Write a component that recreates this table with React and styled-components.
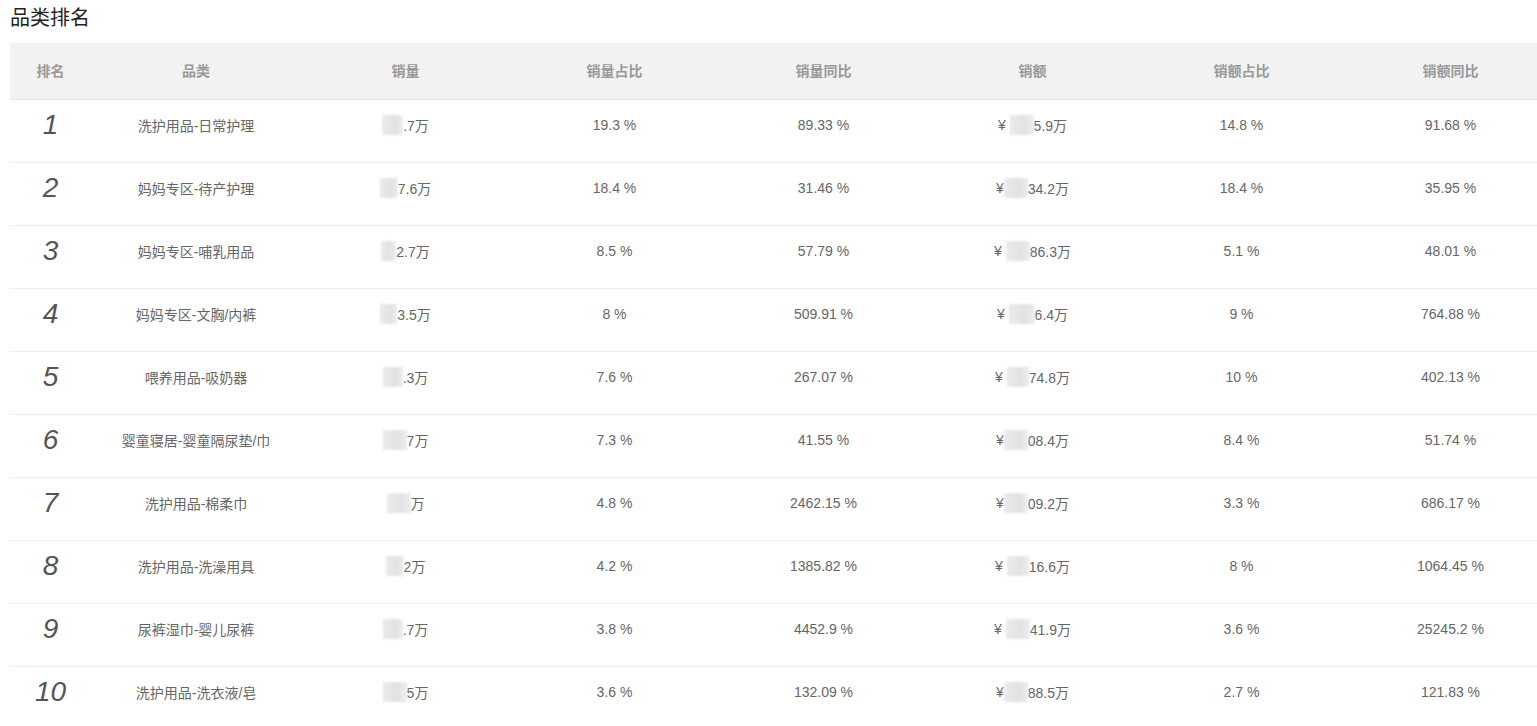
import React from "react";
import styled, { createGlobalStyle } from "styled-components";

const GlobalStyle = createGlobalStyle`
  html, body {
    margin: 0;
    padding: 0;
    overflow: hidden;
    background: #fff;
  }
  body {
    font-family: "Liberation Sans", "Noto Sans CJK SC", Arial, sans-serif;
  }
`;

const rows = [
  { name: "洗护用品-日常护理", qty: ".7万", qb: 21, qs: "19.3 %", qy: "89.33 %", yen: "¥ ", amt: "5.9万", ab: 24, as: "14.8 %", ay: "91.68 %" },
  { name: "妈妈专区-待产护理", qty: "7.6万", qb: 18, qs: "18.4 %", qy: "31.46 %", yen: "¥", amt: "34.2万", ab: 24, as: "18.4 %", ay: "35.95 %" },
  { name: "妈妈专区-哺乳用品", qty: "2.7万", qb: 15, qs: "8.5 %", qy: "57.79 %", yen: "¥ ", amt: "86.3万", ab: 24, as: "5.1 %", ay: "48.01 %" },
  { name: "妈妈专区-文胸/内裤", qty: "3.5万", qb: 17, qs: "8 %", qy: "509.91 %", yen: "¥ ", amt: "6.4万", ab: 26, as: "9 %", ay: "764.88 %" },
  { name: "喂养用品-吸奶器", qty: ".3万", qb: 20, qs: "7.6 %", qy: "267.07 %", yen: "¥ ", amt: "74.8万", ab: 22, as: "10 %", ay: "402.13 %" },
  { name: "婴童寝居-婴童隔尿垫/巾", qty: "7万", qb: 24, qs: "7.3 %", qy: "41.55 %", yen: "¥", amt: "08.4万", ab: 24, as: "8.4 %", ay: "51.74 %" },
  { name: "洗护用品-棉柔巾", qty: "万", qb: 24, qs: "4.8 %", qy: "2462.15 %", yen: "¥", amt: "09.2万", ab: 24, as: "3.3 %", ay: "686.17 %" },
  { name: "洗护用品-洗澡用具", qty: "2万", qb: 18, qs: "4.2 %", qy: "1385.82 %", yen: "¥ ", amt: "16.6万", ab: 22, as: "8 %", ay: "1064.45 %" },
  { name: "尿裤湿巾-婴儿尿裤", qty: ".7万", qb: 20, qs: "3.8 %", qy: "4452.9 %", yen: "¥ ", amt: "41.9万", ab: 24, as: "3.6 %", ay: "25245.2 %" },
  { name: "洗护用品-洗衣液/皂", qty: "5万", qb: 24, qs: "3.6 %", qy: "132.09 %", yen: "¥", amt: "88.5万", ab: 24, as: "2.7 %", ay: "121.83 %" },
];

const headers = ["排名", "品类", "销量", "销量占比", "销量同比", "销额", "销额占比", "销额同比"];

function App() {
  return (
    <>
      <GlobalStyle />
      <Page>
        <Title>品类排名</Title>
        <Table>
          <HeadRow>
            {headers.map((h) => (
              <HeadCell key={h}>{h}</HeadCell>
            ))}
          </HeadRow>
          {rows.map((r, i) => (
            <Row key={r.name}>
              <Rank>{i + 1}</Rank>
              <Cell>{r.name}</Cell>
              <Cell>
                <Masked $w={r.qb} />
                {r.qty}
              </Cell>
              <Cell>{r.qs}</Cell>
              <Cell>{r.qy}</Cell>
              <Cell>
                {r.yen}
                <Masked $w={r.ab} />
                {r.amt}
              </Cell>
              <Cell>{r.as}</Cell>
              <Cell>{r.ay}</Cell>
            </Row>
          ))}
        </Table>
      </Page>
    </>
  );
}

export default App;

const Page = styled.div`
  padding: 0 10px;
  width: 1560px;
`;

const Title = styled.div`
  font-size: 20px;
  line-height: 26px;
  color: #222;
  padding: 5px 0 12px;
`;

const Table = styled.div`
  width: 1545px;
`;

const HeadRow = styled.div`
  display: grid;
  grid-template-columns: 81px 210px repeat(6, 209px);
  height: 57px;
  background: #f2f2f2;
  border-bottom: 1px solid #e6e6ee;
  box-sizing: border-box;
`;

const HeadCell = styled.div`
  display: flex;
  align-items: center;
  justify-content: center;
  padding-bottom: 2px;
  font-size: 14px;
  font-weight: bold;
  color: #999;
`;

const Row = styled.div`
  display: grid;
  grid-template-columns: 81px 210px repeat(6, 209px);
  height: 63px;
  border-bottom: 1px solid #ededf3;
  box-sizing: border-box;
`;

const Cell = styled.div`
  display: flex;
  align-items: center;
  justify-content: center;
  padding-bottom: 12px;
  font-size: 14px;
  color: #666;
  white-space: pre;
`;

const Rank = styled(Cell)`
  font-size: 28px;
  font-style: italic;
  color: #555;
`;

const Masked = styled.span`
  display: inline-block;
  width: ${(p) => p.$w}px;
  height: 20px;
  background: linear-gradient(90deg, #ebebeb, #e2e2e2 60%, #ededed);
  filter: blur(0.8px);
`;
